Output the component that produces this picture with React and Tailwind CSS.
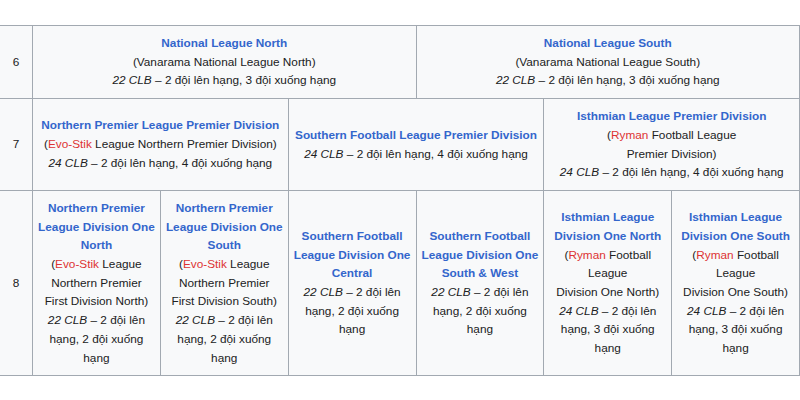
import React from 'react';

const Link = ({ children }) => <span className="text-[#3366cc]">{children}</span>;
const Red = ({ children }) => <span className="text-[#dd3333]">{children}</span>;

function Cell({ span = '', children }) {
  return (
    <div className={`bg-[#f8f9fa] flex flex-col justify-center items-center text-center px-[5px] py-2 ${span}`}>
      {children}
    </div>
  );
}

function Num({ n }) {
  return <div className="bg-[#f8f9fa] flex items-center justify-center">{n}</div>;
}

function Stats({ clubs, up, down }) {
  return (
    <div>
      <i>{clubs} CLB</i> – {up} đội lên hạng, {down} đội xuống hạng
    </div>
  );
}

export default function App() {
  return (
    <div className="w-[800px] h-[400px] bg-white overflow-hidden" style={{ fontFamily: '"Liberation Sans", Arial, sans-serif' }}>
      <div className="mt-[25px] grid grid-cols-[32px_repeat(6,minmax(0,1fr))] gap-px bg-[#a2a9b1] py-px pr-px text-[11.8px] leading-[18.7px] text-[#202122]">
        {/* Level 6 */}
        <Num n="6" />
        <Cell span="col-span-3">
          <b><Link>National League North</Link></b>
          <div>(Vanarama National League North)</div>
          <Stats clubs="22" up="2" down="3" />
        </Cell>
        <Cell span="col-span-3">
          <b><Link>National League South</Link></b>
          <div>(Vanarama National League South)</div>
          <Stats clubs="22" up="2" down="3" />
        </Cell>

        {/* Level 7 */}
        <Num n="7" />
        <Cell span="col-span-2">
          <b><Link>Northern Premier League Premier Division</Link></b>
          <div>(<Red>Evo-Stik</Red> League Northern Premier Division)</div>
          <Stats clubs="24" up="2" down="4" />
        </Cell>
        <Cell span="col-span-2">
          <b><Link>Southern Football League Premier Division</Link></b>
          <Stats clubs="24" up="2" down="4" />
        </Cell>
        <Cell span="col-span-2">
          <b><Link>Isthmian League Premier Division</Link></b>
          <div>(<Red>Ryman</Red> Football League<br />Premier Division)</div>
          <Stats clubs="24" up="2" down="4" />
        </Cell>

        {/* Level 8 */}
        <Num n="8" />
        <Cell>
          <b><Link>Northern Premier League Division One North</Link></b>
          <div>(<Red>Evo-Stik</Red> League Northern Premier<br />First Division North)</div>
          <Stats clubs="22" up="2" down="2" />
        </Cell>
        <Cell>
          <b><Link>Northern Premier League Division One South</Link></b>
          <div>(<Red>Evo-Stik</Red> League Northern Premier<br />First Division South)</div>
          <Stats clubs="22" up="2" down="2" />
        </Cell>
        <Cell>
          <b><Link>Southern Football League Division One Central</Link></b>
          <Stats clubs="22" up="2" down="2" />
        </Cell>
        <Cell>
          <b><Link>Southern Football League Division One South &amp; West</Link></b>
          <Stats clubs="22" up="2" down="2" />
        </Cell>
        <Cell>
          <b><Link>Isthmian League Division One North</Link></b>
          <div>(<Red>Ryman</Red> Football League<br />Division One North)</div>
          <Stats clubs="24" up="2" down="3" />
        </Cell>
        <Cell>
          <b><Link>Isthmian League Division One South</Link></b>
          <div>(<Red>Ryman</Red> Football League<br />Division One South)</div>
          <Stats clubs="24" up="2" down="3" />
        </Cell>
      </div>
    </div>
  );
}
